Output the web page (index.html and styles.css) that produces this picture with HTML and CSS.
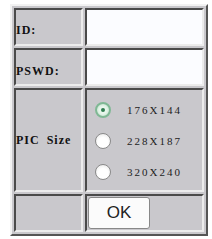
FILE: index.html
```html
<!DOCTYPE html>
<html>
    <head>
        <title>Login</title>
        <link rel="stylesheet" href="styles.css">
    </head>
    <body>
        <table class="login">
            <tr class="row-text">
                <td class="label id">ID:</td>
                <td class="field"><input type="text" name="id"></td>
            </tr>
            <tr class="row-text">
                <td class="label pswd">PSWD:</td>
                <td class="field"><input type="password" name="pswd"></td>
            </tr>
            <tr class="row-size">
                <td class="label">PIC Size</td>
                <td class="sizes">
                    <label class="size"><span class="radio checked"></span>176X144</label>
                    <label class="size"><span class="radio"></span>228X187</label>
                    <label class="size"><span class="radio"></span>320X240</label>
                </td>
            </tr>
            <tr class="row-btn">
                <td class="label"></td>
                <td class="btn-cell"><button type="button">OK</button></td>
            </tr>
        </table>
    </body>
</html>
```
FILE: styles.css
```css
html {
    background: #fff;
}
body {
    margin: 0;
    padding: 4px 0 0 10px;
}
.login {
    width: 198px;
    border: 2px solid;
    border-color: #f2f2f2 #555 #555 #f2f2f2;
    border-spacing: 2px;
    background: #c9c8cc;
}
.login td {
    border: 2px solid;
    border-color: #4a4a4a #ececec #ececec #4a4a4a;
    padding: 0;
}
.label {
    width: 65px;
    font-family: "Liberation Serif", serif;
    font-weight: bold;
    font-size: 12px;
    letter-spacing: 1px;
    word-spacing: 3px;
    color: #111;
    vertical-align: middle;
}
.row-text td {
    height: 34px;
}
.row-text .label.id {
    height: 28px;
    padding-top: 6px;
}
.row-text .label.pswd {
    height: 26px;
    padding-top: 8px;
}
.field {
    background: #fff;
}
.field input {
    display: block;
    width: 100%;
    height: 34px;
    border: none;
    outline: none;
    padding: 0;
    background: #fbfcff;
}
.row-size td {
    height: 100px;
}
.row-size .sizes {
    height: 96px;
    padding: 4px 0 0 8px;
    vertical-align: top;
}
.size {
    display: flex;
    align-items: center;
    height: 31px;
    font-family: "Liberation Serif", serif;
    font-size: 11px;
    letter-spacing: 2px;
    color: #222;
}
.radio {
    width: 16px;
    height: 16px;
    margin-right: 16px;
    border-radius: 50%;
    border: 1px solid #8a8a8a;
    background: radial-gradient(circle at 50% 60%, #fff 45%, #e2e2e2 100%);
    box-sizing: border-box;
    position: relative;
}
.radio.checked {
    border: 2px solid #7fb894;
    background: radial-gradient(circle, #e8f6ec 40%, #b9dcc5 100%);
}
.radio.checked:after {
    content: "";
    position: absolute;
    left: 4px;
    top: 4px;
    width: 4px;
    height: 4px;
    border-radius: 50%;
    background: #2f7d50;
}
.row-btn td {
    height: 34px;
}
.btn-cell {
    vertical-align: middle;
}
.btn-cell button {
    display: block;
    margin-left: 1px;
    width: 62px;
    height: 32px;
    border: 1px solid #888;
    border-radius: 3px;
    background: #fbfbfb;
    font-family: "Liberation Sans", sans-serif;
    font-size: 17px;
    color: #222;
}
```
